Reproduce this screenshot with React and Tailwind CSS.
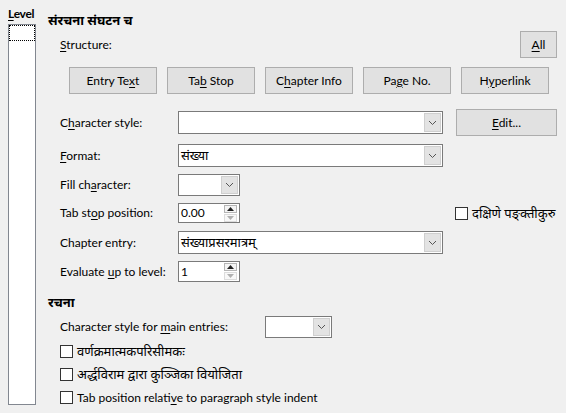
import React from "react";

const U = ({ children }) => <span className="underline underline-offset-2">{children}</span>;

const Chevron = () => (
  <svg width="9" height="6" viewBox="0 0 9 6" className="block">
    <path d="M1 1 L4.5 4.5 L8 1" fill="none" stroke="#555" strokeWidth="1" />
  </svg>
);

const Combo = ({ w, h = 23, text }) => (
  <div className="flex border border-[#7a7a7a] bg-white" style={{ width: w, height: h }}>
    <div className="flex-1 flex items-center pl-[2px] overflow-hidden whitespace-nowrap text-[13px]">{text}</div>
    <div className="w-[17px] m-[1px] bg-[#e3e3e3] border border-[#cfcfcf] flex items-center justify-center">
      <Chevron />
    </div>
  </div>
);

const Spin = ({ text, h }) => (
  <div className="flex w-[62px] border border-[#7a7a7a] bg-white" style={{ height: h }}>
    <div className="flex-1 flex items-center pl-[2px]">{text}</div>
    <div className="w-[13px] mr-[2px] flex flex-col justify-center gap-[1px]">
      <div className="h-[8px] border border-[#b5b5b5] bg-[#f4f4f4] flex items-center justify-center">
        <svg width="7" height="4" viewBox="0 0 7 4"><path d="M0 4 L3.5 0 L7 4 Z" fill="#222" /></svg>
      </div>
      <div className="h-[8px] border border-[#dcdcdc] bg-[#f8f8f8] flex items-center justify-center">
        <svg width="7" height="4" viewBox="0 0 7 4"><path d="M0 0 L3.5 4 L7 0 Z" fill="#b0b0b0" /></svg>
      </div>
    </div>
  </div>
);

const Btn = ({ children, w = 88, h = 27 }) => (
  <div
    className="flex items-center justify-center bg-[#e1e1e1] border border-[#adadad]"
    style={{ width: w, height: h }}
  >
    <span>{children}</span>
  </div>
);

const Check = ({ children }) => (
  <div className="h-[23px] flex items-center pl-[12px]">
    <div className="w-[13px] h-[13px] border border-[#333] bg-white" />
    <span className="ml-[4px] text-[13px]">{children}</span>
  </div>
);

export default function App() {
  return (
    <div
      className="w-[566px] h-[413px] bg-[#f0f0f0] flex text-[12px] text-black leading-none overflow-hidden"
      style={{ fontFamily: 'Lato, "Noto Sans", sans-serif' }}
    >
      <div className="ml-[8px] w-[28px] flex flex-col pt-[8px]">
        <div className="h-[16px] font-bold tracking-[-0.3px]"><U>L</U>evel</div>
        <div className="h-[381px] border border-[#828790] bg-white">
          <div className="h-[16px] border border-dotted border-black" />
        </div>
      </div>
      <div className="ml-[12px] flex-1 flex flex-col pr-[9px]">
        <div className="mt-[11px] h-[18px] flex items-center font-bold text-[13px]">संरचना संघटन च</div>
        <div className="mt-[2px] h-[27px] flex items-center justify-between">
          <span className="pl-[12px]"><U>S</U>tructure:</span>
          <Btn w={37}><U>A</U>ll</Btn>
        </div>
        <div className="mt-[9px] h-[27px] flex pl-[21px] gap-[10px]">
          <Btn>Entry Te<U>x</U>t</Btn>
          <Btn>Ta<U>b</U> Stop</Btn>
          <Btn>C<U>h</U>apter Info</Btn>
          <Btn>Pa<U>g</U>e No.</Btn>
          <Btn>H<U>y</U>perlink</Btn>
        </div>
        <div className="mt-[15px] h-[27px] flex items-center">
          <span className="pl-[12px] w-[130px]">C<U>h</U>aracter style:</span>
          <Combo w={265} />
          <div className="ml-[13px]"><Btn w={101}><U>E</U>dit...</Btn></div>
        </div>
        <div className="mt-[8px] h-[23px] flex items-center">
          <span className="pl-[12px] w-[130px]"><U>F</U>ormat:</span>
          <Combo w={265} text="संख्या" />
        </div>
        <div className="mt-[7px] h-[22px] flex items-center">
          <span className="pl-[12px] w-[130px]">Fill ch<U>a</U>racter:</span>
          <Combo w={62} h={22} />
        </div>
        <div className="mt-[7px] h-[20px] flex items-center">
          <span className="pl-[12px] w-[130px]">Tab st<U>o</U>p position:</span>
          <Spin text="0.00" h={20} />
          <div className="ml-[215px] flex items-center">
            <div className="w-[13px] h-[13px] border border-[#333] bg-white" />
            <span className="ml-[4px] text-[13px]">दक्षिणे पङ्क्तीकुरु</span>
          </div>
        </div>
        <div className="mt-[8px] h-[23px] flex items-center">
          <span className="pl-[12px] w-[130px]">Chapter entry:</span>
          <Combo w={265} text="संख्याप्रसरमात्रम्" />
        </div>
        <div className="mt-[7px] h-[21px] flex items-center">
          <span className="pl-[12px] w-[130px]">Evaluate <U>u</U>p to level:</span>
          <Spin text="1" h={21} />
        </div>
        <div className="mt-[11px] h-[18px] flex items-center font-bold text-[13px]">रचना</div>
        <div className="mt-[5px] h-[22px] flex items-center">
          <span className="pl-[12px] w-[217px]">Character style for <U>m</U>ain entries:</span>
          <Combo w={67} h={22} />
        </div>
        <div className="mt-[2px]">
          <Check>वर्णक्रमात्मकपरिसीमकः</Check>
          <Check>अर्द्धविराम द्वारा कुञ्जिका वियोजिता</Check>
          <Check><span className="text-[12px]">Tab position relati<U>v</U>e to paragraph style indent</span></Check>
        </div>
      </div>
    </div>
  );
}
